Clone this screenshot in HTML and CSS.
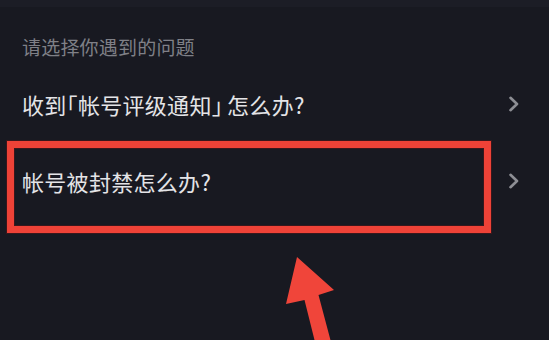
FILE: index.html
```html
<!DOCTYPE html>
<html lang="zh-CN">
<head>
<meta charset="utf-8">
<title>问题</title>
<link rel="stylesheet" href="styles.css">
</head>
<body>
<div class="page">
  <div class="topbar"></div>
  <div class="section-title">请选择你遇到的问题</div>
  <ul class="list">
    <li class="row">
      <span class="label">收到<span class="lb">「</span>帐号评级通知<span class="rb">」</span>怎么办?</span>
      <svg class="chev" width="12" height="16" viewBox="0 0 12 16"><polyline points="2.5,1.8 9,8 2.5,14.2" fill="none" stroke="#8d8e94" stroke-width="2.6" stroke-linecap="round" stroke-linejoin="round"/></svg>
    </li>
    <li class="row">
      <span class="label">帐号被封禁怎么办?</span>
      <svg class="chev" width="12" height="16" viewBox="0 0 12 16"><polyline points="2.5,1.8 9,8 2.5,14.2" fill="none" stroke="#8d8e94" stroke-width="2.6" stroke-linecap="round" stroke-linejoin="round"/></svg>
    </li>
  </ul>
  <div class="highlight"></div>
  <svg class="arrow" width="60" height="92" viewBox="280 250 60 92">
    <polygon points="297,257 334,290 318.5,295 331,342 315,342 304.5,300 286,304" fill="#f0453a"/>
  </svg>
</div>
</body>
</html>
```

FILE: styles.css
```css
html, body {
  margin: 0;
  padding: 0;
  background: #181921;
}

.page {
  position: relative;
  width: 549px;
  height: 340px;
  overflow: hidden;
  background: #181921;
  font-family: "Noto Sans CJK SC", "Noto Sans", sans-serif;
}

.topbar {
  height: 7px;
  background: #1c1d26;
}

.section-title {
  padding: 28px 0 7px 22px;
  font-size: 19px;
  line-height: 23px;
  letter-spacing: 0.2px;
  color: #7f8087;
}

.list {
  list-style: none;
  margin: 0;
  padding: 0;
}

.row {
  height: 77px;
  display: flex;
  align-items: center;
  justify-content: space-between;
  padding: 0 29px 0 22px;
}

.label {
  font-size: 22px;
  letter-spacing: 0.3px;
  color: #e4e4e7;
  white-space: nowrap;
}

.lb {
  font-feature-settings: "halt";
}

.rb {
  font-feature-settings: "halt";
  margin-right: 4px;
}

.chev {
  display: block;
  flex: none;
}

.highlight {
  position: absolute;
  left: 7px;
  top: 141px;
  width: 470px;
  height: 78px;
  border: 7px solid #ee4237;
  box-shadow: 0 0 0 1px rgba(120, 20, 20, 0.35), inset 0 0 0 1px rgba(120, 20, 20, 0.35);
}

.arrow {
  position: absolute;
  left: 280px;
  top: 250px;
  display: block;
}
```
